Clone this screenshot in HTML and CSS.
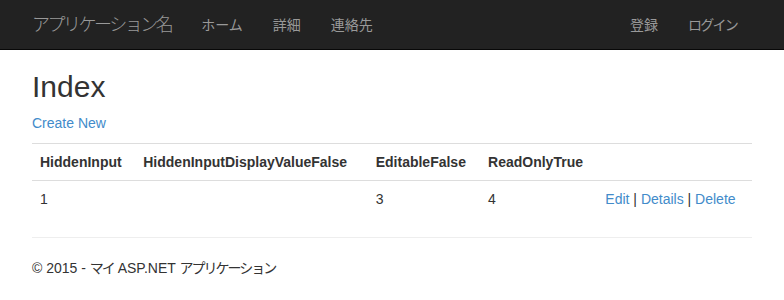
FILE: index.html
```html
<!DOCTYPE html>
<html lang="ja">
<head>
<meta charset="utf-8">
<title>Index - マイ ASP.NET アプリケーション</title>
<link rel="stylesheet" href="styles.css">
</head>
<body>
<div class="navbar">
  <div class="container nav-inner">
    <a class="brand" href="#">アプリケーション名</a>
    <ul class="nav">
      <li><a href="#">ホーム</a></li>
      <li><a href="#">詳細</a></li>
      <li><a href="#">連絡先</a></li>
    </ul>
    <ul class="nav nav-right">
      <li><a href="#">登録</a></li>
      <li><a href="#" class="kana">ログイン</a></li>
    </ul>
  </div>
</div>
<div class="container body-content">
  <h2 class="title">Index</h2>
  <p class="create"><a href="#">Create New</a></p>
  <table class="table">
    <tr>
      <th>HiddenInput</th>
      <th>HiddenInputDisplayValueFalse</th>
      <th>EditableFalse</th>
      <th>ReadOnlyTrue</th>
      <th></th>
    </tr>
    <tr>
      <td>1</td>
      <td></td>
      <td>3</td>
      <td>4</td>
      <td><a href="#">Edit</a> | <a href="#">Details</a> | <a href="#">Delete</a></td>
    </tr>
  </table>
  <hr class="rule">
  <footer class="footer">
    <p>© 2015 - <span class="ja">マイ</span> ASP.NET <span class="ja">アプリケーション</span></p>
  </footer>
</div>
</body>
</html>
```
FILE: styles.css
```css
* { box-sizing: border-box; }
html, body { margin: 0; padding: 0; }
body {
  font-family: "Liberation Sans", "Noto Sans CJK JP", sans-serif;
  font-size: 14px;
  line-height: 20px;
  color: #333;
  background: #fff;
}
a { color: #428bca; text-decoration: none; }
.container {
  width: 750px;
  margin: 0 auto;
  padding: 0 15px;
}
.navbar {
  height: 50px;
  background: #222;
  border-bottom: 1px solid #080808;
}
.nav-inner {
  display: flex;
  align-items: flex-start;
}
.brand {
  margin-left: -15px;
  padding: 15px;
  font-size: 18px;
  line-height: 20px;
  height: 50px;
  color: #999;
  letter-spacing: -2.5px;
  font-weight: 300;
}
.nav {
  list-style: none;
  margin: 0;
  padding: 0;
  display: flex;
}
.nav a {
  display: block;
  padding: 15px;
  line-height: 20px;
  color: #999;
  font-size: 14px;
}
.nav a.kana { letter-spacing: -1.75px; }
.nav-right { margin-left: auto; }
.title {
  margin: 20px 0 10px;
  font-size: 30px;
  font-weight: 500;
  line-height: 33px;
}
.create { margin: 0 0 10px; }
.table {
  width: 100%;
  border-collapse: collapse;
  border-spacing: 0;
  margin-bottom: 20px;
}
.table th, .table td {
  padding: 8px;
  line-height: 20px;
  text-align: left;
  vertical-align: top;
  border-top: 1px solid #ddd;
}
.table th { font-weight: bold; }
.rule {
  margin: 20px 0;
  border: 0;
  border-top: 1px solid #eee;
  height: 0;
}
.footer p { margin: 0 0 10px; }
.ja { letter-spacing: -2px; }
```
